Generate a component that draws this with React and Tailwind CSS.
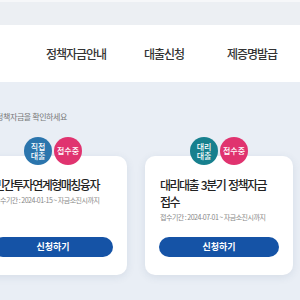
import React from 'react';

const NAV = ['정책자금안내', '대출신청', '제증명발급'];

const LOANS = [
  {
    id: 1,
    type: ['직접', '대출'],
    typeColor: 'bg-[#2b75ad]',
    title: '민간투자연계형매칭융자',
    period: '접수기간 : 2024-01-15 ~ 자금소진시까지',
  },
  {
    id: 2,
    type: ['대리', '대출'],
    typeColor: 'bg-[#17808e]',
    title: '대리대출 3분기 정책자금 접수',
    period: '접수기간 : 2024-07-01 ~ 자금소진시까지',
  },
];

const LoanCard = ({ loan }) => {
  return (
    <div className="relative w-[148px] h-[119px] shrink-0 bg-white rounded-[10px] shadow-[0_2px_8px_rgba(40,70,110,0.10)] flex flex-col pt-[20px] pb-[18px] px-[14px]">
      <div className="absolute top-[-19px] left-0 right-0 flex justify-center gap-[2px]">
        <div className={`w-[28px] h-[28px] rounded-full ${loan.typeColor} text-white text-[8px] leading-[9px] font-medium flex items-center justify-center text-center`}>
          {loan.type[0]}<br />{loan.type[1]}
        </div>
        <div className="w-[28px] h-[28px] rounded-full bg-[#e0336f] text-white text-[8px] font-medium flex items-center justify-center">
          접수중
        </div>
      </div>
      <h3 className="px-[1px] text-[12px] leading-[17px] font-medium text-[#222] tracking-[-1.5px] [word-spacing:1.5px] break-keep">
        {loan.title}
      </h3>
      <p className="px-[1px] mt-[1px] text-[7px] leading-[12px] text-[#888] tracking-[-0.5px] whitespace-nowrap">{loan.period}</p>
      <button className="mt-auto h-[20px] w-full rounded-full bg-[#1553a6] text-white text-[9px] font-bold">
        신청하기
      </button>
    </div>
  );
};

const App = () => {
  return (
    <div className="w-[300px] h-[300px] overflow-hidden bg-[#e9eef5] font-['Noto_Sans_CJK_KR','Noto_Sans',sans-serif]">
      <div className="h-[2px] bg-[#f6f7f9]"></div>
      <div className="h-[23px] bg-[#eceff3]"></div>
      <header className="h-[57px] bg-white flex items-center pl-[32px]">
        {NAV.map((item) => (
          <a key={item} className="w-[88px] text-center text-[12px] font-medium text-[#333] tracking-[-1px]">
            {item}
          </a>
        ))}
      </header>

      <div className="pt-[29px] w-[67px] flex justify-end">
        <p className="whitespace-nowrap text-[8px] leading-[12px] text-[#777] tracking-[-0.4px]">
          지금 신청할 수 있는 정책자금을 확인하세요
        </p>
      </div>

      <div className="mt-[33px] ml-[-21px] flex gap-[18px]">
        {LOANS.map((loan) => (
          <LoanCard key={loan.id} loan={loan} />
        ))}
      </div>
    </div>
  );
};

export default App;
